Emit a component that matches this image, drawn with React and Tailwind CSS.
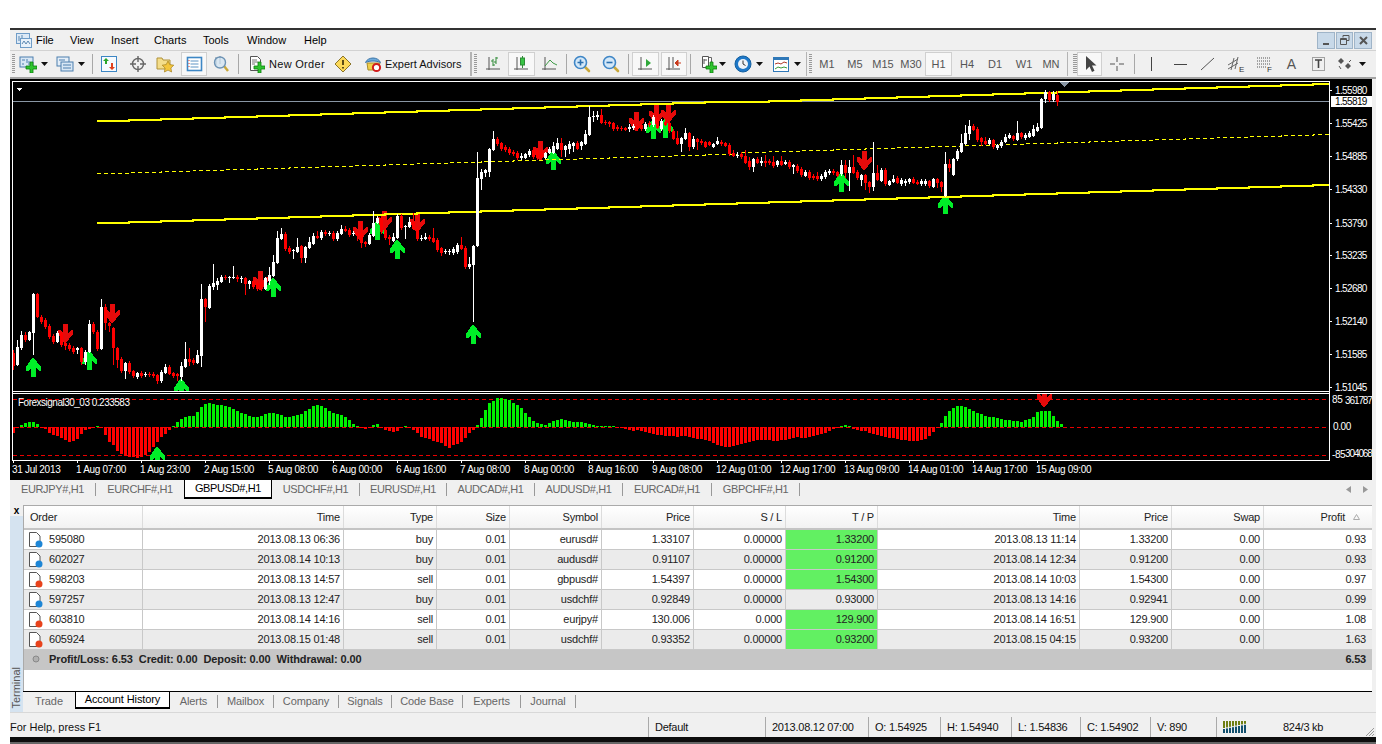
import React from 'react';

const CANDLES = [
  [0,353,366,350,370],[1,347,365,340,366],[1,335,348,331,350],[0,335,340,332,342],[1,332,340,331,341],[1,294,333,293,355],[0,294,317,293,318],[0,317,322],
  [0,320,327],[0,326,337],[0,336,342],[1,333,342,331,343],[0,333,345],[0,343,346,342,350],[0,345,349],[0,348,352],
  [1,348,350,347,354],[0,348,362,347,365],[1,352,362,350,365],[1,324,352,320,353],[0,324,332,322,334],[0,332,349],[1,307,349,299,350],[0,307,323,304,330],
  [0,323,326,322,332],[0,328,348,327,365],[0,348,360,347,368],[0,359,371],[1,363,371,362,379],[0,363,372],[0,371,376,370,378],[1,373,377,372,379],
  [0,373,376],[1,374,375],[0,374,375],[0,374,376],[0,375,381,374,384],[1,372,381],[1,367,373,364,374],[0,367,374,365,375],
  [0,373,376,372,378],[0,374,376,373,381],[1,366,377,362,381],[1,359,367,342,368],[0,359,362,348,366],[0,360,363],[1,355,363,350,364],[1,299,356,284,367],
  [0,299,307,298,322],[1,286,308,284,309],[1,283,287,264,290],[1,281,285,278,290],[1,277,282,275,283],[0,277,278],[1,277,278,276,283],[1,277,278,266,279],
  [0,277,279,275,282],[1,278,279,276,283],[0,278,284,277,295],[1,281,284,280,289],[0,281,287],[0,283,289],[0,282,289],[1,278,289,277,290],
  [1,275,281,267,285],[1,262,276,255,277],[1,238,263,231,264],[1,234,239,228,240],[0,234,249],[0,248,252],[1,250,251,249,259],[1,247,252,238,253],
  [0,246,258,245,263],[1,247,258,246,263],[1,242,248,237,249],[1,236,244,233,245],[0,236,238,231,239],[1,232,238],[0,232,234],[1,233,234],
  [0,233,239],[1,233,239],[1,229,234,225,235],[0,229,231,226,232],[0,230,235],[1,233,234],[0,233,236,232,241],[0,233,243,222,248],
  [0,242,244,241,247],[1,235,244,233,245],[1,223,236,211,237],[1,218,223,216,224],[0,218,232],[0,230,238],[0,237,239,235,245],[1,237,241,233,242],
  [1,216,238,214,239],[0,216,228],[1,226,227,225,239],[1,222,227,217,228],[0,222,229,213,230],[0,229,239],[1,238,239,235,241],[1,237,239,233,240],
  [0,237,239],[0,238,242,228,243],[0,240,250],[0,248,253,247,256],[1,251,252,249,254],[1,251,252,249,255],[1,249,253],[1,245,252],
  [0,245,249,237,250],[0,248,267],[1,264,267,257,269],[1,246,265,245,322],[1,178,246,152,247],[1,172,179,169,190],[1,170,173,169,177],[1,149,172,148,177],
  [1,139,150,131,151],[0,139,144],[0,143,149,142,151],[0,147,150],[0,149,153],[0,152,154],[0,153,158],[1,156,158,153,160],
  [1,154,158,153,159],[1,151,155],[0,150,157],[0,150,158],[0,152,158],[1,153,158,152,159],[1,149,153,147,154],[1,146,153,142,154],
  [1,143,149,138,150],[0,143,150,138,157],[1,146,150,145,157],[1,144,149,141,154],[1,143,146,142,152],[0,143,149,141,150],[1,142,146,141,150],[1,134,144,130,145],
  [1,117,135,106,136],[1,116,117,111,122],[1,115,117,111,120],[0,115,123,109,124],[0,122,123,120,125],[0,122,124,121,127],[0,123,129,122,131],[0,127,129],
  [0,128,129],[0,128,130,127,131],[1,127,129,124,132],[1,126,128],[0,126,129],[0,125,129],[1,124,129],[0,123,125],
  [1,117,125],[0,118,128,112,129],[1,121,129],[0,122,125,118,126],[0,123,131],[0,131,139,129,140],[0,138,144,131,145],[1,138,144,137,152],
  [1,133,139,128,140],[0,133,147,132,151],[1,139,147,136,149],[0,139,142,138,150],[0,141,143],[0,142,147,141,148],[0,142,145,141,146],[1,144,147,143,148],
  [1,141,144,137,145],[0,142,144],[0,143,146,142,147],[0,145,154],[0,153,156,150,157],[1,155,156,152,158],[0,154,157],[0,156,163,150,164],
  [0,161,167,157,170],[1,159,167,158,172],[0,159,163,157,164],[1,161,163,157,166],[0,161,163,155,167],[0,161,163],[0,162,166,156,168],[1,161,165,160,167],
  [0,161,165,156,166],[1,162,164,160,165],[0,162,167],[1,165,167,164,174],[0,166,171],[0,169,175],[1,172,176,170,177],[0,172,178],
  [0,176,178,174,180],[0,176,179,172,181],[1,176,179],[1,172,177],[1,171,173],[0,171,173],[0,172,176,171,177],[1,165,174,160,176],
  [0,165,173,160,178],[1,167,173,160,191],[0,167,173,155,174],[0,172,178],[1,175,180,174,186],[0,175,183,174,190],[0,182,187,181,193],[1,173,187,142,191],
  [0,173,180,165,181],[1,170,181,168,182],[0,170,184,168,186],[1,181,185,180,186],[1,179,182,175,183],[0,178,183,176,184],[1,180,184],[1,181,183,179,186],
  [1,179,182,178,184],[0,179,183,177,184],[0,182,184,180,185],[1,181,184,179,186],[1,181,184,179,186],[0,181,186,180,188],[1,179,187,178,188],[0,179,183,178,188],
  [0,182,187,181,192],[1,164,196,152,197],[0,164,168,159,172],[1,159,175,158,176],[1,151,159],[1,143,152,134,153],[1,133,144,125,145],[1,126,134,120,140],
  [0,126,130,124,131],[0,129,140],[0,138,142,137,146],[0,141,144,137,145],[1,140,144,138,145],[0,140,147,139,149],[1,145,148,144,150],[1,142,146],
  [1,137,142,134,143],[1,135,138,133,139],[0,136,139,135,141],[1,133,140,121,141],[0,133,137,132,139],[1,135,138],[1,133,137,131,138],[1,129,136,125,137],
  [1,127,131,123,132],[1,99,128,98,129],[1,92,99,90,103],[0,92,100,91,102],[1,94,100,91,102],[0,95,102,91,106],
];

const HIST = [
  -6,-1,2,4,5,5,3,-1,-2,-6,-8,-9,-11,-13,-15,-14,-12,-7,-3,-2,
  -1,1,-1,-8,-15,-18,-24,-27,-29,-30,-30,-31,-30,-28,-25,-20,-15,-10,-7,-3,
  1,5,8,10,11,11,15,20,23,24,23,22,22,21,20,18,16,14,13,11,
  10,10,11,13,14,14,13,12,10,10,11,12,13,16,18,21,22,21,19,16,
  14,13,12,10,7,3,1,-1,-2,-1,2,3,-1,-3,-4,-5,-4,-1,1,-1,
  -3,-6,-10,-11,-12,-14,-15,-16,-19,-21,-18,-17,-15,-11,-6,-3,2,9,17,24,
  26,29,29,28,27,24,22,19,14,10,6,4,3,2,4,6,7,8,7,6,
  5,5,5,4,3,2,1,1,1,1,1,-1,-1,-2,-3,-4,-3,-4,-5,-6,
  -7,-8,-8,-9,-9,-9,-10,-9,-9,-10,-11,-12,-12,-13,-14,-16,-18,-19,-20,-20,
  -19,-18,-17,-16,-15,-14,-13,-13,-13,-13,-14,-14,-13,-13,-12,-11,-10,-11,-11,-10,
  -9,-8,-7,-6,-4,-2,-1,1,2,1,-2,-3,-4,-4,-6,-7,-8,-9,-10,-11,
  -11,-12,-13,-13,-14,-14,-14,-13,-12,-9,-5,-1,4,11,16,19,21,21,20,18,
  16,14,13,11,10,10,9,8,7,7,6,6,5,7,8,10,15,16,16,16,11,6,3,
];

const PRICES = [
  ['1.55980', 90], ['1.55425', 123], ['1.54885', 156], ['1.54330', 189], ['1.53790', 223], ['1.53235', 255],
  ['1.52680', 288], ['1.52140', 321], ['1.51585', 354], ['1.51045', 387],
];

const TIMES = [
  '31 Jul 2013', '1 Aug 07:00', '1 Aug 23:00', '2 Aug 15:00', '5 Aug 08:00', '6 Aug 00:00', '6 Aug 16:00', '7 Aug 08:00', '8 Aug 00:00',
  '8 Aug 16:00', '9 Aug 08:00', '12 Aug 01:00', '12 Aug 17:00', '13 Aug 09:00', '14 Aug 01:00', '14 Aug 17:00', '15 Aug 09:00',
];

const UP_ARROWS = [[33,358],[89,351],[181,379],[473,325],[273,278],[397,240],[377,221],[553,151],[653,120],[665,119],[841,173],[945,195]];
const DOWN_ARROWS = [[65,324],[112,304],[260,271],[360,221],[384,211],[417,213],[540,141],[636,112],[656,105],[668,104],[864,151]];

const ROWS = [
  ['595080', '2013.08.13 06:36', 'buy', '0.01', 'eurusd#', '1.33107', '0.00000', '1.33200', '2013.08.13 11:14', '1.33200', '0.00', '0.93', true],
  ['602027', '2013.08.14 10:13', 'buy', '0.01', 'audusd#', '0.91107', '0.00000', '0.91200', '2013.08.14 12:34', '0.91200', '0.00', '0.93', true],
  ['598203', '2013.08.13 14:57', 'sell', '0.01', 'gbpusd#', '1.54397', '0.00000', '1.54300', '2013.08.14 10:03', '1.54300', '0.00', '0.97', true],
  ['597257', '2013.08.13 12:47', 'buy', '0.01', 'usdchf#', '0.92849', '0.00000', '0.93000', '2013.08.13 14:16', '0.92941', '0.00', '0.99', false],
  ['603810', '2013.08.14 14:16', 'sell', '0.01', 'eurjpy#', '130.006', '0.000', '129.900', '2013.08.14 16:51', '129.900', '0.00', '1.08', true],
  ['605924', '2013.08.15 01:48', 'sell', '0.01', 'usdchf#', '0.93352', '0.00000', '0.93200', '2013.08.15 04:15', '0.93200', '0.00', '1.63', true],
];

const HEADERS = ['Time', 'Type', 'Size', 'Symbol', 'Price', 'S / L', 'T / P', 'Time', 'Price', 'Swap'];
const COLS = 'grid grid-cols-[119px_201px_93px_73px_92px_92px_92px_92px_202px_92px_92px_1fr]';

// stepped channel lines, the terminal draws them in 32px segments
const stairs = (y0, y1) => {
  let d = `M97 ${y0}`;
  const steps = Math.ceil((1329 - 97) / 32);
  for (let k = 0; k < steps; k++) {
    const x = Math.min(97 + (k + 1) * 32, 1329);
    d += `H${x}V${Math.round(y0 + ((y1 - y0) * (k + 1)) / steps)}`;
  }
  return d;
};

const Ico = ({ children, size = 18 }) => (
  <svg width={size} height={size} viewBox="0 0 18 18" className="block">{children}</svg>
);

const Plus = ({ x = 0, y = 0 }) => (
  <path transform={`translate(${x} ${y})`} d="M4 0h3v4h4v3H7v4H4V7H0V4h4z" fill="#2fc42f" stroke="#0c7d0c" strokeWidth=".8" />
);

const Axes = () => <path d="M4 2v13M1 14h14" stroke="#555" strokeWidth="1" fill="none" />;

const Lens = ({ mark }) => (
  <g>
    <path d="M11 11l5 5" stroke="#c9a83a" strokeWidth="2.6" strokeLinecap="round" />
    <circle cx="7.5" cy="7.5" r="6" fill="#d4e8f8" stroke="#3f86c6" strokeWidth="1.6" />
    <path d={mark} stroke="#2a6fae" strokeWidth="1.6" />
  </g>
);

const Caret = () => (
  <svg width="7" height="4" viewBox="0 0 7 4" className="block"><path d="M0 0h7L3.5 4z" fill="#111" /></svg>
);

const Cell = ({ className = '', children }) => (
  <div className={`flex items-center justify-center shrink-0 h-[24px] ${className}`}>{children}</div>
);

const Sep = ({ className = '' }) => (
  <div className={`flex justify-center shrink-0 ${className}`}><div className="w-px h-[20px] bg-[#a8a8a8]" /></div>
);

const Grip = ({ className = '' }) => (
  <div className={`shrink-0 h-[20px] bg-[repeating-linear-gradient(to_bottom,#9a9a9a_0,#9a9a9a_1px,transparent_1px,transparent_2px)] ${className}`} />
);

const Arrow = ({ x, y, up }) => {
  const pts = '-1,0 1,0 8,9 8,13 6,13 3,10 3,19 -2,19 -2,10 -5,13 -7,13 -7,9';
  return up ? (
    <polygon transform={`translate(${x} ${y})`} points={pts} fill="#00ee28" />
  ) : (
    <polygon transform={`translate(${x} ${y + 19}) scale(1 -1)`} points={pts} fill="#e60b0b" />
  );
};

const Chart = () => (
  <svg width="1362" height="401" viewBox="10 79 1362 401" className="block shrink-0 bg-black" shapeRendering="crispEdges">
    <defs>
      <clipPath id="mainClip"><rect x="13" y="82" width="1316" height="309" /></clipPath>
      <clipPath id="subClip"><rect x="13" y="394" width="1316" height="66" /></clipPath>
    </defs>

    <path d="M12.5 81.5H1329.5V460.5H12.5Z" fill="none" stroke="#fff" />
    <path d="M12 391.5H1330M12 393.5H1330" stroke="#fff" />
    <path d="M13 101.5H1329" stroke="#8996a4" />

    <g clipPath="url(#mainClip)">
      {UP_ARROWS.map(([x, y]) => <Arrow key={`u${x}`} x={x} y={y} up />)}
      {DOWN_ARROWS.map(([x, y]) => <Arrow key={`d${x}`} x={x} y={y} />)}
      <path d={stairs(121, 83)} stroke="#ffff00" strokeWidth="2" fill="none" />
      <path d={stairs(223, 184)} stroke="#ffff00" strokeWidth="2" fill="none" />
      <path d={stairs(173, 133)} stroke="#ffff00" strokeWidth="1" strokeDasharray="4 3" fill="none" />
      {CANDLES.map(([white, top, bottom, hi, lo], i) => {
        const x = 13 + i * 4;
        const color = white ? '#fff' : '#ff0000';
        const y1 = hi ?? top - 2;
        const y2 = lo ?? bottom + 2;
        return (
          <g key={x} fill={color}>
            <rect x={x} y={y1} width="1" height={y2 - y1} />
            <rect x={x - 1} y={top} width="3" height={Math.max(bottom - top, 1)} />
          </g>
        );
      })}
    </g>

    <g clipPath="url(#subClip)">
      {[399, 427, 455].map((y) => (
        <path key={y} d={`M13 ${y + 0.5}H1329`} stroke="#e80000" strokeDasharray="4 3" />
      ))}
      {HIST.map((v, i) => (
        <rect key={i} x={12 + i * 4} y={v > 0 ? 427 - v : 427} width="3" height={Math.abs(v)} fill={v > 0 ? '#00f000' : '#ff0000'} />
      ))}
      <Arrow x={157} y={447} up />
      <Arrow x={1044} y={388} />
    </g>

    <polygon points="16,88 23,88 19.5,91" fill="#fff" />
    <polygon points="1060,82 1069,82 1064.5,87" fill="#8996a4" />

    <text x="18" y="406" className="fill-white text-[10px] tracking-[-0.5px]">Forexsignal30_03 0.233583</text>

    {PRICES.map(([label, y]) => (
      <g key={label}>
        <rect x="1329" y={y} width="3" height="1" fill="#fff" />
        <text x="1335" y={y + 4} className="fill-white text-[10px] tracking-[-0.62px]">{label}</text>
      </g>
    ))}
    <rect x="1331" y="96" width="41" height="11" fill="#fff" />
    <text x="1335" y="105" className="fill-black text-[10px] tracking-[-0.62px]">1.55819</text>

    <text x="1332" y="403" className="fill-white text-[10px] tracking-[-0.4px]">85</text>
    <text x="1345" y="404" className="fill-white text-[10px] tracking-[-1.1px]">361787</text>
    <text x="1333" y="430" className="fill-white text-[10px] tracking-[-0.4px]">0.00</text>
    <text x="1332" y="458" className="fill-white text-[10px] tracking-[-0.4px]">-85</text>
    <text x="1345" y="457" className="fill-white text-[10px] tracking-[-1.1px]">304068</text>

    {TIMES.map((label, i) => (
      <g key={label}>
        <rect x={13 + i * 64} y="460" width="1" height="3" fill="#fff" />
        <text x={12 + i * 64} y="473" className="fill-white text-[10px] tracking-[-0.3px]">{label}</text>
      </g>
    ))}
  </svg>
);

const MenuBar = () => (
  <div className="flex items-center h-[20px] shrink-0 text-[11px] text-black bg-[#f0f0f0]">
    <div className="w-[26px] flex justify-center pl-[1px]">
      <svg width="16" height="16" viewBox="0 0 16 16">
        <rect x=".5" y="1.5" width="13" height="10" fill="#dce9f6" stroke="#6f9cc7" />
        <rect x="4.5" y="6.5" width="11" height="9" fill="#e8f1fa" stroke="#6f9cc7" />
        <path d="M6 12l2-3 2 3 2-3 2 3" stroke="#5b87b0" fill="none" />
        <path d="M3 4v5M6 3v3" stroke="#5b87b0" />
      </svg>
    </div>
    <span className="w-[34px]">File</span>
    <span className="w-[41px]">View</span>
    <span className="w-[43px]">Insert</span>
    <span className="w-[49px]">Charts</span>
    <span className="w-[44px]">Tools</span>
    <span className="w-[57px]">Window</span>
    <span>Help</span>
    <div className="ml-auto mr-[4px] flex gap-[1px]">
      <div className="w-[18px] h-[17px] border border-[#9fb4c8] bg-[#c8d9e9] flex items-end justify-center pb-[3px]">
        <div className="w-[6px] h-[2px] bg-[#555]" />
      </div>
      <div className="w-[17px] h-[17px] border border-[#9fb4c8] bg-[#c8d9e9] flex items-center justify-center">
        <svg width="10" height="10" viewBox="0 0 10 10"><path d="M3 2.5V.5h6v5H7M.5 3.5h6v6h-6zM.5 4.5h6" stroke="#555" fill="none" /></svg>
      </div>
      <div className="w-[18px] h-[17px] border border-[#9fb4c8] bg-[#c8d9e9] flex items-center justify-center">
        <svg width="9" height="9" viewBox="0 0 9 9"><path d="M1 1l7 7M8 1L1 8" stroke="#555" strokeWidth="2" /></svg>
      </div>
    </div>
  </div>
);

const Toolbar = () => (
  <div className="flex items-center h-[29px] shrink-0 bg-[#f0f0f0] border-t border-t-[#d2d2d2] border-b-2 border-b-[#a4a4a4] text-[11px] text-[#111]">
    <Cell className="w-[8px] justify-start pl-[2px]"><Grip className="w-[3px]" /></Cell>
    <Cell className="w-[20px]">
      <Ico>
        <rect x="1" y="2" width="13" height="10" fill="#d8e7f5" stroke="#4c7fae" />
        <path d="M3 5h3M3 9h2M8 4v4M10 6v4" stroke="#4c7fae" />
        <Plus x={7} y={7} />
      </Ico>
    </Cell>
    <Cell className="w-[12px]"><Caret /></Cell>
    <div className="w-[5px] shrink-0" />
    <Cell className="w-[20px]">
      <Ico>
        <rect x="1" y="2" width="12" height="9" fill="#e4eef8" stroke="#4c7fae" />
        <rect x="5" y="7" width="12" height="9" fill="#d8e7f5" stroke="#4c7fae" />
        <path d="M3 5h6M7 10h8M7 13h8" stroke="#4c7fae" />
      </Ico>
    </Cell>
    <Cell className="w-[12px]"><Caret /></Cell>
    <Sep className="w-[10px]" />
    <Cell className="w-[24px]">
      <Ico>
        <rect x="1.5" y="1.5" width="15" height="15" fill="#f6fafe" stroke="#3c86c4" />
        <path d="M6 3l3 3H7v3H5V6H3z" fill="#2aa52a" />
        <path d="M12 15l-3-3h2V8h2v4h2z" fill="#e0401c" />
      </Ico>
    </Cell>
    <Cell className="w-[34px]">
      <Ico>
        <circle cx="9" cy="9" r="5.5" fill="none" stroke="#666" strokeWidth="1.4" />
        <path d="M9 1v6M9 11v6M1 9h6M11 9h6" stroke="#666" strokeWidth="1.4" />
      </Ico>
    </Cell>
    <Cell className="w-[20px]">
      <Ico>
        <path d="M1 3h5l1 2h7v9H1z" fill="#f4dd8a" stroke="#b09238" />
        <path d="M12 6l1.8 3.6 4 .6-2.9 2.8.7 4-3.6-1.9-3.6 1.9.7-4-2.9-2.8 4-.6z" fill="#f4c63c" stroke="#a37f1c" strokeWidth=".7" />
      </Ico>
    </Cell>
    <div className="w-[6px] shrink-0" />
    <Cell className="w-[26px] border border-[#d0d0d0] bg-[#f8f8f8]">
      <Ico>
        <rect x="2.5" y="2.5" width="14" height="13" fill="#fff" stroke="#3d87c5" strokeWidth="1.6" />
        <path d="M5.5 6h8M5.5 9h8M5.5 12h8" stroke="#5d93c4" />
        <path d="M4 5v1M4 8v1M4 11v1" stroke="#e03a2a" />
      </Ico>
    </Cell>
    <Cell className="w-[28px]">
      <Ico>
        <path d="M4 2v8M8 1v8" stroke="#7b8b9c" />
        <path d="M12 11l4 5" stroke="#c9a83a" strokeWidth="2.4" />
        <circle cx="8" cy="7.5" r="5.5" fill="#cfe2f2" fillOpacity=".7" stroke="#6d93b5" strokeWidth="1.4" />
      </Ico>
    </Cell>
    <Sep className="w-[6px]" />
    <Cell className="w-[90px] justify-start pl-[6px]">
      <Ico>
        <path d="M3.5 1.5h7l3 3v11h-10z" fill="#fff" stroke="#555" />
        <path d="M5 5h5M5 7h6M5 9h3" stroke="#777" />
        <Plus x={7} y={7} />
      </Ico>
      <span className="ml-[4px] whitespace-nowrap tracking-[0.3px]">New Order</span>
    </Cell>
    <Cell className="w-[24px]">
      <Ico>
        <path d="M9 1l8 8-8 8-8-8z" fill="#fcd95a" stroke="#8a7428" />
        <path d="M9 5v5M9 12v1.6" stroke="#4a3c10" strokeWidth="1.8" />
      </Ico>
    </Cell>
    <Cell className="w-[112px] justify-start pl-[9px]">
      <Ico>
        <path d="M3 8l1 7h10l2-7z" fill="#f2cf4a" stroke="#a78d2b" />
        <path d="M1.5 7.5C4 1.5 14 1.5 16.5 7.5 12 5.5 6 5.5 1.5 7.5z" fill="#6eaadb" stroke="#3b75a8" />
        <circle cx="12.5" cy="12.5" r="3.6" fill="#fff" stroke="#d11d1d" strokeWidth="2" />
      </Ico>
      <span className="ml-[3px] whitespace-nowrap">Expert Advisors</span>
    </Cell>
    <div className="flex items-center w-[13px] shrink-0 h-[24px] pl-[3px] gap-[2px]">
      <div className="w-[2px] h-[24px] bg-[#b4b4b4]" />
      <Grip className="w-[3px]" />
    </div>
    <Cell className="w-[28px]">
      <Ico>
        <Axes />
        <path d="M8 4v7M8 6H6M8 10h2M11 2v7M11 3h2M11 7H9" stroke="#2f8a36" />
      </Ico>
    </Cell>
    <Cell className="w-[27px] border border-[#d0d0d0] bg-[#f8f8f8]">
      <Ico>
        <Axes />
        <path d="M9.5 1v12" stroke="#2f8a36" />
        <rect x="7.5" y="3" width="4" height="7" fill="#37c445" stroke="#2f8a36" />
      </Ico>
    </Cell>
    <Cell className="w-[30px]">
      <Ico>
        <Axes />
        <path d="M4 11l5-6 3 3 4 2" stroke="#3d9a46" fill="none" shapeRendering="auto" />
      </Ico>
    </Cell>
    <Cell className="w-[3px]"><div className="w-px h-[20px] bg-[#a8a8a8]" /></Cell>
    <Cell className="w-[28px]">
      <Ico><Lens mark="M4.5 7.5h6M7.5 4.5v6" /></Ico>
    </Cell>
    <Cell className="w-[30px]">
      <Ico><Lens mark="M4.5 7.5h6" /></Ico>
    </Cell>
    <Cell className="w-[4px]"><div className="w-px h-[20px] bg-[#a8a8a8]" /></Cell>
    <div className="w-[2px] shrink-0" />
    <Cell className="w-[27px] border border-[#d0d0d0] bg-[#f8f8f8]">
      <Ico>
        <Axes />
        <path d="M9 4l5 4-5 4z" fill="#2fa83a" />
      </Ico>
    </Cell>
    <div className="w-[2px] shrink-0" />
    <Cell className="w-[26px] border border-[#d0d0d0] bg-[#f8f8f8]">
      <Ico>
        <Axes />
        <path d="M8 2v11" stroke="#555" />
        <path d="M16 8H12M10 8l3-3v6z" fill="#c93a1c" stroke="#c93a1c" />
      </Ico>
    </Cell>
    <Sep className="w-[6px]" />
    <div className="w-[6px] shrink-0" />
    <Cell className="w-[18px]">
      <Ico>
        <path d="M6.5 2.5h6v10h-6z" fill="#fff" stroke="#666" />
        <path d="M3.5 1.5h6v11h-6z" fill="#fff" stroke="#555" />
        <path d="M5 4v5M5 5h3" stroke="#555" />
        <Plus x={7} y={7} />
      </Ico>
    </Cell>
    <Cell className="w-[10px]"><Caret /></Cell>
    <div className="w-[7px] shrink-0" />
    <Cell className="w-[18px]">
      <svg width="18" height="18" viewBox="0 0 18 18" className="block">
        <circle cx="9" cy="9" r="8" fill="#1e78c8" stroke="#1460a0" />
        <circle cx="9" cy="9" r="5" fill="#eef3f8" />
        <path d="M9 5.5V9l2.5 1.5" stroke="#333" fill="none" />
      </svg>
    </Cell>
    <Cell className="w-[14px]"><Caret /></Cell>
    <div className="w-[6px] shrink-0" />
    <Cell className="w-[18px]">
      <Ico>
        <rect x="1.5" y="2.5" width="15" height="14" fill="#fff" stroke="#2f78b8" />
        <rect x="2" y="3" width="14" height="2" fill="#2f78b8" />
        <path d="M3 9l3-1 3 1 3-2 3 1" stroke="#b03a2a" fill="none" shapeRendering="auto" />
        <path d="M3 14l3-2 3 1 3-1 3 1" stroke="#3a9a3a" fill="none" shapeRendering="auto" />
      </Ico>
    </Cell>
    <Cell className="w-[14px]"><Caret /></Cell>
    <Cell className="w-[4px]"><div className="w-px h-[24px] bg-[#b4b4b4]" /></Cell>
    <Cell className="w-[5px]"><Grip className="w-[3px]" /></Cell>
    <Cell className="w-[28px] text-[#555]">M1</Cell>
    <Cell className="w-[28px] text-[#555]">M5</Cell>
    <Cell className="w-[28px] text-[#555]">M15</Cell>
    <Cell className="w-[28px] text-[#555]">M30</Cell>
    <Cell className="w-[27px] text-[#555] border border-[#d0d0d0] bg-[#f8f8f8]">H1</Cell>
    <Cell className="w-[30px] text-[#555]">H4</Cell>
    <Cell className="w-[26px] text-[#555]">D1</Cell>
    <Cell className="w-[32px] text-[#555]">W1</Cell>
    <Cell className="w-[22px] text-[#555]">MN</Cell>
    <Cell className="w-[10px]"><div className="w-px h-[24px] bg-[#b4b4b4]" /></Cell>
    <Cell className="w-[5px]"><Grip className="w-[4px]" /></Cell>
    <Cell className="w-[25px] border border-[#d0d0d0] bg-[#f8f8f8]">
      <Ico><path d="M5 1v14l3.5-3.5L11 17l2.5-1.2L11 10.5h4.5z" fill="#444" /></Ico>
    </Cell>
    <Cell className="w-[30px]">
      <Ico><path d="M9 2v5M9 11v5M2 9h5M11 9h5" stroke="#555" /></Ico>
    </Cell>
    <Cell className="w-[4px]"><div className="w-px h-[20px] bg-[#a8a8a8]" /></Cell>
    <Cell className="w-[30px]"><div className="w-px h-[14px] bg-[#444]" /></Cell>
    <Cell className="w-[28px]"><div className="w-[13px] h-px bg-[#444]" /></Cell>
    <Cell className="w-[28px]">
      <Ico><path d="M2 15L15 3" stroke="#555" shapeRendering="auto" /></Ico>
    </Cell>
    <Cell className="w-[28px]">
      <Ico>
        <path d="M1 10l10-6M1 14l10-6M4 15l3-12M8 14l3-12" stroke="#666" shapeRendering="auto" />
        <text x="12" y="17" className="text-[8px] fill-[#333]">E</text>
      </Ico>
    </Cell>
    <Cell className="w-[27px]">
      <Ico>
        <path d="M2 3h13M2 6h13M2 9h13M2 12h9" stroke="#555" strokeDasharray="1 1" />
        <text x="12" y="17" className="text-[8px] fill-[#333]">F</text>
      </Ico>
    </Cell>
    <Cell className="w-[29px] text-[14px] text-[#555]">A</Cell>
    <Cell className="w-[26px]">
      <Ico>
        <rect x="2.5" y="2.5" width="12" height="13" fill="none" stroke="#555" strokeDasharray="1 1" />
        <path d="M5 5h7M8.5 5v8" stroke="#444" strokeWidth="1.6" />
      </Ico>
    </Cell>
    <Cell className="w-[26px]">
      <Ico>
        <path d="M5 3l3 3-3 3-3-3z" fill="#555" />
        <path d="M12 8l3 3-3 3-3-3z" fill="#555" />
        <path d="M3 11l2 3M15 5l-2 2" stroke="#555" />
      </Ico>
    </Cell>
    <Cell className="w-[8px]"><Caret /></Cell>
  </div>
);

const SYMBOL_TABS = [
  ['EURJPY#,H1', 'w-[86px]'], ['EURCHF#,H1', 'w-[88px]'], ['GBPUSD#,H1', 'w-[88px]'], ['USDCHF#,H1', 'w-[88px]'], ['EURUSD#,H1', 'w-[87px]'],
  ['AUDCAD#,H1', 'w-[88px]'], ['AUDUSD#,H1', 'w-[88px]'], ['EURCAD#,H1', 'w-[89px]'], ['GBPCHF#,H1', 'w-[88px]'],
];

const SymbolTabs = () => (
  <div className="flex items-start h-[25px] shrink-0 bg-[#f0f0f0] text-[11px] text-[#666] tracking-[-0.35px]">
    {SYMBOL_TABS.map(([label, w], i) =>
      i === 2 ? (
        <div key={label} className={`${w} h-[19px] flex items-center justify-center bg-white text-black border-x border-b-2 border-black`}>{label}</div>
      ) : (
        <div key={label} className={`${w} h-[19px] flex items-center justify-center`}>
          <span className={`w-full text-center ${i === 1 ? '' : 'border-r border-[#999]'} leading-[13px]`}>{label}</span>
        </div>
      )
    )}
    <div className="ml-auto mr-[8px] h-[19px] flex items-center gap-[12px]">
      <svg width="5" height="7" viewBox="0 0 5 7"><path d="M5 0v7L0 3.5z" fill="#999" /></svg>
      <svg width="5" height="7" viewBox="0 0 5 7"><path d="M0 0v7l5-3.5z" fill="#999" /></svg>
    </div>
  </div>
);

const OrderIcon = ({ buy }) => (
  <svg width="18" height="18" viewBox="0 0 18 18" className="block shrink-0">
    <path d="M2.5 1.5h7l3.5 3.5v10.5h-10.500z" fill="#fff" stroke="#555" />
    <circle cx="12" cy="13" r="3.500" fill={buy ? '#1e86d6' : '#e8431c'} />
  </svg>
);

const Table = () => (
  <div className="flex flex-col flex-1 min-h-0 bg-white border-t border-l border-[#aaaaaa] text-[11px] text-[#222] tracking-[-0.2px]">
    <div className={`${COLS} h-[24px] shrink-0 border-b-2 border-[#c4c4c4] bg-[linear-gradient(to_bottom,#ffffff,#f2f2f2)]`}>
      <div className="flex items-center pl-[6px] border-r border-[#dcdcdc]">Order</div>
      {HEADERS.map((h, i) => (
        <div key={i} className="flex items-center justify-end pr-[3px] border-r border-[#dcdcdc]">{h}</div>
      ))}
      <div className="flex items-center justify-end pr-[12px] gap-[8px]">
        <span>Profit</span>
        <svg width="7" height="6" viewBox="0 0 7 6"><path d="M.5 5.5h6L3.500.500z" fill="none" stroke="#aaa" /></svg>
      </div>
    </div>
    {ROWS.map((row, r) => (
      <div key={row[0]} className={`${COLS} h-[20px] shrink-0 border-b border-[#c8c8c8] ${r % 2 ? 'bg-[#ebebeb]' : 'bg-white'}`}>
        <div className="flex items-center gap-[4px] pl-[3px] border-r border-[#c8c8c8]">
          <OrderIcon buy={row[2] === 'buy'} />
          <span>{row[0]}</span>
        </div>
        {row.slice(1, 12).map((cell, c) => (
          <div
            key={c}
            className={`flex items-center justify-end pr-[3px] ${c < 10 ? 'border-r border-[#c8c8c8]' : 'pr-[6px]'} ${c === 6 && row[12] ? 'bg-[#62f062]' : ''}`}
          >
            {cell}
          </div>
        ))}
      </div>
    ))}
    <div className="flex items-center h-[20px] shrink-0 bg-[#c6c6c6] font-bold pl-[8px] pr-[6px] pb-[2px]">
      <svg width="8" height="8" viewBox="0 0 8 8" className="shrink-0"><circle cx="4" cy="4" r="3" fill="#b0b0b0" stroke="#888" /></svg>
      <span className="ml-[9px] whitespace-pre tracking-[-0.1px]">Profit/Loss: 6.53  Credit: 0.00  Deposit: 0.00  Withdrawal: 0.00</span>
      <span className="ml-auto">6.53</span>
    </div>
    <div className="flex-1" />
  </div>
);

const BOTTOM_TABS = [
  ['Alerts', 'w-[48px]'], ['Mailbox', 'w-[56px]'], ['Company', 'w-[65px]'], ['Signals', 'w-[53px]'], ['Code Base', 'w-[71px]'], ['Experts', 'w-[58px]'], ['Journal', 'w-[55px]'],
];

const BottomTabs = () => (
  <div className="flex items-start h-[21px] shrink-0 border-t border-black bg-[#f0f0f0] text-[11px] text-[#666] tracking-[-0.1px]">
    <div className="w-[52px] h-[19px] flex items-center justify-center">Trade</div>
    <div className="w-[95px] h-[17px] flex items-center justify-center bg-white text-black border-x border-b-2 border-black">Account History</div>
    {BOTTOM_TABS.map(([label, w]) => (
      <div key={label} className={`${w} h-[19px] flex items-center`}>
        <span className="w-full text-center leading-[13px] border-r border-[#999]">{label}</span>
      </div>
    ))}
  </div>
);

const StatusCell = ({ className = '', children }) => (
  <div className={`flex items-center h-[20px] shrink-0 pl-[6px] border-l border-[#aaaaaa] tracking-[-0.25px] ${className}`}>{children}</div>
);

const StatusBar = () => (
  <div className="flex items-center h-[25px] shrink-0 pt-[4px] bg-[#f0f0f0] border-t border-[#d8d8d8] text-[11px] text-[#111]">
    <div className="w-[638px] h-[20px] flex items-center">For Help, press F1</div>
    <StatusCell className="w-[117px]">Default</StatusCell>
    <StatusCell className="w-[103px]">2013.08.12 07:00</StatusCell>
    <StatusCell className="w-[72px]">O: 1.54925</StatusCell>
    <StatusCell className="w-[71px]">H: 1.54940</StatusCell>
    <StatusCell className="w-[69px]">L: 1.54836</StatusCell>
    <StatusCell className="w-[70px]">C: 1.54902</StatusCell>
    <StatusCell className="w-[66px]">V: 890</StatusCell>
    <StatusCell className="flex-1 relative">
      <svg width="24" height="12" viewBox="0 0 24 12" className="block shrink-0">
        {[0, 1, 2, 3, 4, 5, 6, 7].map((i) => (
          <g key={i}>
            <rect x={i * 3} y="0" width="2" height={7 - i * 0.6} fill="#6f7f14" />
            <rect x={i * 3} y={8 - i * 0.6} width="2" height={4 + i * 0.6} fill="#12506e" />
          </g>
        ))}
      </svg>
      <span className="ml-[36px]">824/3 kb</span>
      <svg width="10" height="10" viewBox="0 0 10 10" className="absolute right-[1px] bottom-0">
        <path d="M9 1L1 9M9 4L4 9M9 7L7 9" stroke="#999" />
      </svg>
    </StatusCell>
  </div>
);

export default function App() {
  return (
    <div className="w-[1382px] h-[744px] overflow-hidden bg-white flex flex-col font-['Liberation_Sans',Arial,sans-serif]">
      <div className="ml-[10px] mr-[6px] mt-[28px] flex flex-col flex-1 min-h-0 border-t-2 border-t-[#333333] bg-[#f0f0f0]">
        <MenuBar />
        <Toolbar />
        <div className="flex bg-[#f0f0f0] shrink-0"><Chart /></div>
        <SymbolTabs />
        <div className="flex h-[207px] shrink-0">
          <div className="w-[13px] flex flex-col shrink-0">
            <div className="h-[11px] flex items-center justify-center text-[10px] font-bold leading-none text-black">x</div>
            <div className="flex-1 bg-[#d5e3f0] flex items-end justify-center pb-[3px]">
              <span className="[writing-mode:vertical-rl] rotate-180 text-[11px] text-[#555]">Terminal</span>
            </div>
          </div>
          <div className="flex-1 flex flex-col min-w-0 pr-[4px]">
            <Table />
            <BottomTabs />
          </div>
        </div>
        <StatusBar />
        <div className="h-[5px] bg-[#0d0d0d] shrink-0" />
        <div className="h-[2px] bg-[#666666] shrink-0" />
      </div>
    </div>
  );
}
